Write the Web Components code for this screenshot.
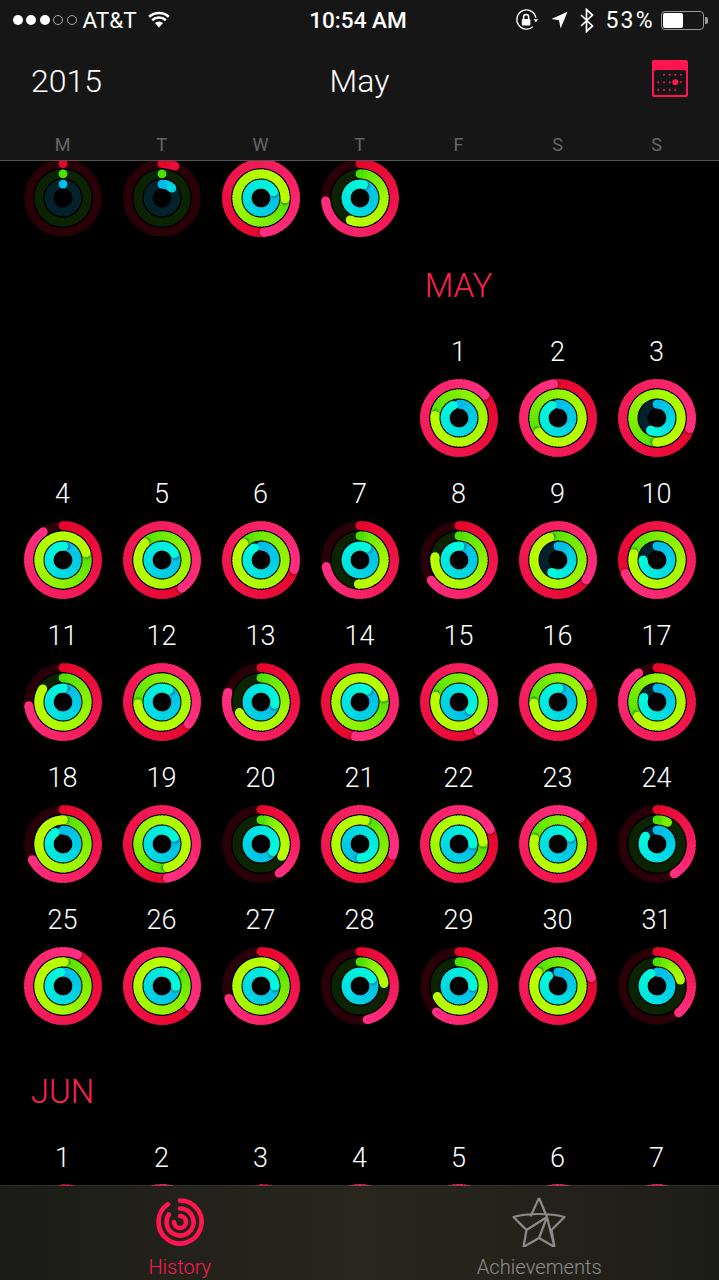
<!DOCTYPE html>
<html><head><meta charset="utf-8"><style>
html,body{margin:0;padding:0;background:#000;font-family:Roboto,"Liberation Sans",sans-serif;color:#fff}
activity-app{height:1280px}
</style></head><body>
<activity-app>
<cal-header slot="header"></cal-header>
<month-list></month-list>
<tab-bar slot="tabs"></tab-bar>
</activity-app>
<script>
const lerp=(a,b,t)=>a.map((v,i)=>Math.round(v+(b[i]-v)*t));
const rgb=c=>`rgb(${c[0]},${c[1]},${c[2]})`;
const polar=(r,d,c=39)=>{const a=(d-90)*Math.PI/180;return [c+r*Math.cos(a),c+r*Math.sin(a)]};
const RINGS=[
 {r:34.4,w:8.9,e:1,from:[230,6,44],to:[255,46,128],track:'#2a0008'},
 {r:24.1,w:8.9,e:2.4,from:[79,224,0],to:[184,255,0],track:'#0b2300'},
 {r:13.9,w:8.9,e:1,from:[0,188,232],to:[0,250,220],track:'#02212b'}
];
function drawArc(def,val,idx){
  const {r,w,e,from,to,track}=def;let s=`<circle cx="39" cy="39" r="${r}" fill="none" stroke="${track}" stroke-width="${w}"/>`;
  const over=val>360,head=val%360,step=6,lap=4;
  const ease=x=>1-Math.pow(1-Math.min(1,x),e);
  const seg=(a,b,c)=>{const [x1,y1]=polar(r,a),[x2,y2]=polar(r,b);
    return `<path d="M${x1.toFixed(2)} ${y1.toFixed(2)}A${r} ${r} 0 0 1 ${x2.toFixed(2)} ${y2.toFixed(2)}" fill="none" stroke="${c}" stroke-width="${w}"/>`};
  if(over){
    for(let d=0;d<360;d+=step){s+=seg(head+d,head+Math.min(360,d+step+lap),rgb(lerp(from,to,ease((d+step/2)/360))));}
    const [sx,sy]=polar(r,head+ (w*0.32/r)*180/Math.PI);
    s+=`<circle cx="${sx.toFixed(2)}" cy="${sy.toFixed(2)}" r="${(w/2+.2)}" fill="url(#sh)"/>`;
  }else if(val>0){
    const den=Math.max(val,120);
    for(let d=0;d<val;d+=step){const end=Math.min(val,d+step+lap);s+=seg(d,end,rgb(lerp(from,to,ease((d+step/2)/den))));}
    const [x0,y0]=polar(r,0);s+=`<circle cx="${x0.toFixed(2)}" cy="${y0.toFixed(2)}" r="${w/2}" fill="${rgb(from)}"/>`;
  }else{
    const [x0,y0]=polar(r,0);s+=`<circle cx="${x0.toFixed(2)}" cy="${y0.toFixed(2)}" r="${w/2}" fill="${rgb(from)}"/>`;return s;
  }
  const [hx,hy]=polar(r,head);
  const c=over?to:lerp(from,to,ease(val/Math.max(val,120)));
  s+=`<circle cx="${hx.toFixed(2)}" cy="${hy.toFixed(2)}" r="${w/2}" fill="${rgb(c)}"/>`;
  return s;
}
class ActivityRing extends HTMLElement{
  connectedCallback(){
    const v=(this.getAttribute('values')||'0,0,0').split(',').map(Number);
    const root=this.attachShadow({mode:'open'});
    root.innerHTML=`<style>:host{display:block;width:78px;height:78px}svg{display:block}</style>
    <svg width="78" height="78" viewBox="0 0 78 78"><defs><radialGradient id="sh"><stop offset="0" stop-color="#000" stop-opacity=".6"/><stop offset="1" stop-color="#000" stop-opacity="0"/></radialGradient></defs>
    ${RINGS.map((d,i)=>drawArc(d,v[i],i)).join('')}</svg>`;
  }
}
customElements.define('activity-ring',ActivityRing);

class DayCell extends HTMLElement{
  connectedCallback(){
    const date=this.getAttribute('date'),vals=this.getAttribute('values');
    const root=this.attachShadow({mode:'open'});
    root.innerHTML=`<style>:host{display:flex;flex-direction:column;align-items:center;padding-bottom:11px}
    .d{height:50px;line-height:52px;font-size:27px;font-weight:300;color:#fff;margin-bottom:var(--gap,3px)}</style>
    ${date?`<div class="d">${date}</div>`:''}${vals?`<activity-ring values="${vals}"></activity-ring>`:''}`;
  }
}
customElements.define('day-cell',DayCell);

class MonthSection extends HTMLElement{
  constructor(){super();const root=this.attachShadow({mode:'open'});
    root.innerHTML=`<style>:host{display:block;padding-top:var(--top,0)}
    .t{display:grid;grid-template-columns:repeat(7,99px);padding:0 13px}
    .n{height:78px;line-height:76px;text-align:center;font-size:33px;font-weight:300;color:#ff2052;grid-column-start:var(--col,1)}
    .g{display:grid;grid-template-columns:repeat(7,99px);padding:0 13px}</style>
    <div class="t"><div class="n"><slot name="name"></slot></div></div><div class="g"><slot></slot></div>`;}
}
customElements.define('month-section',MonthSection);

class MonthList extends HTMLElement{
  connectedCallback(){
    const root=this.attachShadow({mode:'open'});
    const apr=['0,0,0','22,0,45','535,452,424','265,204,375'];
    const may=['409,636,335','713,594,335','468,541,208',
     '325,433,363','505,675,423','466,674,331','259,184,390','234,278,364','485,700,207','607,645,270',
     '264,303,362','490,626,390','286,244,460','548,438,392','506,644,486','422,628,365','328,594,289',
     '243,361,327','531,527,422','148,121,483','469,373,537','425,446,450','401,642,422','150,26,304',
     '385,363,350','487,399,452','249,395,450','168,84,420','221,244,452','436,664,318','141,76,334'];
    const jun=['250,200,200','500,500,400','255,200,200','490,500,400','500,500,400','495,500,400','490,500,400'];
    const cell=(d,v,extra='')=>`<day-cell ${d?`date="${d}"`:''} values="${v}" ${extra}></day-cell>`;
    root.innerHTML=`<style>:host{display:block;margin-top:-2px}
    .g{display:grid;grid-template-columns:repeat(7,99px);padding:0 13px}</style>
    <div class="g">${apr.map(v=>cell('',v)).join('')}</div>
    <month-section style="--col:5"><span slot="name">MAY</span>
      ${may.map((v,i)=>cell(i+1,v,i==0?'style="grid-column-start:5"':'')).join('')}
    </month-section>
    <month-section style="--top:18px;--gap:2px"><span slot="name">JUN</span>
      ${jun.map((v,i)=>cell(i+1,v)).join('')}
    </month-section>`;
  }
}
customElements.define('month-list',MonthList);

class StatusBar extends HTMLElement{
  constructor(){super();const root=this.attachShadow({mode:'open'});
    root.innerHTML=`<style>:host{display:grid;grid-template-columns:1fr auto 1fr;align-items:center;height:40px;padding:0 11px 0 13px;font-size:22.5px;color:#fff}
    .l,.r{display:flex;align-items:center}.r{justify-content:flex-end}
    .dots{display:flex;gap:3.4px;margin-right:6px}
    .dots i{width:10px;height:10px;border-radius:50%;background:#fff;box-sizing:border-box;display:block}
    .dots i.o{background:none;border:1px solid #aaa}
    .wifi{margin:-2px 0 0 10px}
    .time{font-weight:500;font-size:22.6px;margin-right:5px}
    svg{display:block}
    .pct{margin:0 6.3px 0 10px;font-size:23px;letter-spacing:2.2px}
    .bat{width:43px;height:19px;border:1.2px solid #999;border-radius:4px;box-sizing:border-box;padding:1px;display:flex}
    .bat b{display:block;width:20px;background:#fff;border-radius:2px}
    .nub{width:3px;height:7px;background:#999;border-radius:0 2px 2px 0;margin-left:1px}
    </style>
    <div class="l"><div class="dots"><i></i><i></i><i></i><i class="o"></i><i class="o"></i></div><span>AT&amp;T</span>
    <svg class="wifi" width="24" height="18" viewBox="0 0 24 18"><path d="M12 17.5 7.9 13a6 6 0 0 1 8.2 0Z" fill="#fff"/><path d="M5.2 10.2a10 10 0 0 1 13.6 0M2.2 6.8a14.6 14.6 0 0 1 19.6 0" fill="none" stroke="#fff" stroke-width="2.6"/></svg></div>
    <div class="time">10:54 AM</div>
    <div class="r">
    <svg width="24" height="24" viewBox="0 0 24 24" style="margin-right:12px"><path d="M20.6 12.6A9.6 9.6 0 1 1 17 3.8" fill="none" stroke="#fff" stroke-width="1.3" transform="rotate(40 11 12)"/><path d="M18.6 11.2h4.6l-2.3 3Z" fill="#fff"/><rect x="6.8" y="11" width="8.6" height="6.6" rx="1" fill="#fff"/><path d="M8.6 11V9a2.5 2.5 0 0 1 5 0v2" fill="none" stroke="#fff" stroke-width="1.5"/></svg>
    <svg width="17" height="18" viewBox="0 0 17 18" style="margin-right:11px"><path d="M16.5.8 9.6 17.5 8 9.3 .5 8Z" fill="#fff"/></svg>
    <svg width="16" height="25" viewBox="0 0 16 25"><path d="M2 7l11.5 11L7.5 23.5v-22L13.5 7 2 18" fill="none" stroke="#fff" stroke-width="1.7"/></svg>
    <span class="pct">53%</span>
    <div class="bat"><b></b></div><div class="nub"></div>
    </div>`;}
}
customElements.define('status-bar',StatusBar);

class CalHeader extends HTMLElement{
  constructor(){super();const root=this.attachShadow({mode:'open'});
    const dots=[[12,14.7,0],[17.7,14.7,0],[23.3,14.7,0],[29,14.7,0]]
      .concat([6.3,12,17.7,29].map(x=>[x,22.3,0]),[[23.3,22.3,1]],[6.3,12,17.7,23.3].map(x=>[x,30,0]));
    root.innerHTML=`<style>:host{display:block;background:#161616;border-bottom:1px solid #555;box-sizing:border-box;height:161px}
    .title{display:grid;grid-template-columns:1fr auto 1fr;align-items:center;height:82px;font-size:32px;font-weight:300}
    .y{padding-left:31px}.ic{justify-self:end;padding:0 31px 5px 0}svg{display:block}
    .w{display:grid;grid-template-columns:repeat(7,99px);padding:0 13px;height:38px;line-height:45px;text-align:center;font-size:18px;color:#666}</style>
    <status-bar></status-bar>
    <div class="title"><div class="y">2015</div><div>May</div><div class="ic">
      <svg width="36" height="37" viewBox="0 0 36 37"><rect width="36" height="37" rx="2" fill="#ff1550"/><rect x="2" y="10" width="32" height="25" rx="1.5" fill="#161616"/>
      ${dots.map(d=>`<circle cx="${d[0]}" cy="${d[1]}" r="${d[2]?3:1}" fill="#ff1550"/>`).join('')}</svg></div></div>
    <div class="w">${'MTWTFSS'.split('').map(c=>`<span>${c}</span>`).join('')}</div>`;}
}
customElements.define('cal-header',CalHeader);

class TabItem extends HTMLElement{
  constructor(){super();const root=this.attachShadow({mode:'open'});
    root.innerHTML=`<style>:host{display:flex;flex-direction:column;align-items:center;padding-top:11px;color:var(--c)}
    ::slotted(svg){display:block;height:50px}
    .l{margin-top:8px;height:24px;line-height:24px;font-size:var(--fs);font-weight:300}</style>
    <slot name="icon"></slot><div class="l"><slot></slot></div>`;}
}
customElements.define('tab-item',TabItem);

class TabBar extends HTMLElement{
  constructor(){super();const root=this.attachShadow({mode:'open'});
    root.innerHTML=`<style>:host{display:grid;grid-template-columns:1fr 1fr;height:95px;margin-top:-1px;position:relative;box-sizing:border-box;border-top:1px solid rgba(90,90,84,.55);background:linear-gradient(90deg,#1b1c18,#29271c 50%,#1d1d18) padding-box}</style>
    <tab-item style="--c:#ff1a55;--fs:20px">
      <svg slot="icon" width="50" height="50" viewBox="0 0 50 50" fill="none" stroke="#ff1550" stroke-width="4.6" stroke-linecap="round">
        <path d="M25 3.5A21.5 21.5 0 1 1 13 7.2"/><path d="M25 11.5A13.5 13.5 0 1 1 13.9 17.4"/><path d="M25 19a6 6 0 1 1-6 6"/></svg>
      History</tab-item>
    <tab-item style="--c:#8e8e8e;--fs:20.2px">
      <svg slot="icon" width="54" height="50" viewBox="0 0 54 50" fill="none" stroke="#8b8b8b" stroke-width="2.2" stroke-linejoin="round">
        <path d="M27 1 18.5 19.5 M27 1 35 20 M1.5 20C14 16 40 16 52.5 20L39.5 33 42.5 50 27 41 11.5 50 14.5 33Z M1.5 20 14.5 33 35 20 42.5 50 M35 20 27 41 M14.5 33 11.5 50"/></svg>
      Achievements</tab-item>`;}
}
customElements.define('tab-bar',TabBar);

class ActivityApp extends HTMLElement{
  constructor(){super();const root=this.attachShadow({mode:'open'});
    root.innerHTML=`<style>:host{display:flex;flex-direction:column;background:#000;overflow:hidden}
    .m{flex:1;min-height:0;overflow:hidden}</style>
    <slot name="header"></slot><div class="m"><slot></slot></div><slot name="tabs"></slot>`;}
}
customElements.define('activity-app',ActivityApp);
</script>
</body></html>
